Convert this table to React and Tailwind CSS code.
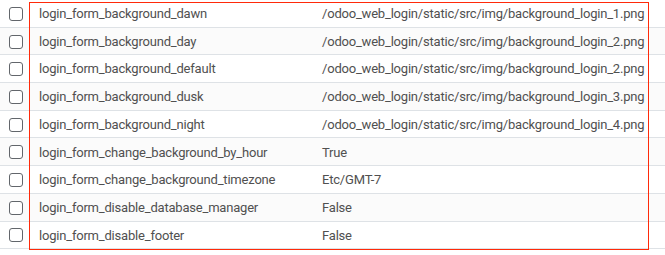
import React from "react";

const rows = [
  ["login_form_background_dawn", "/odoo_web_login/static/src/img/background_login_1.png"],
  ["login_form_background_day", "/odoo_web_login/static/src/img/background_login_2.png"],
  ["login_form_background_default", "/odoo_web_login/static/src/img/background_login_2.png"],
  ["login_form_background_dusk", "/odoo_web_login/static/src/img/background_login_3.png"],
  ["login_form_background_night", "/odoo_web_login/static/src/img/background_login_4.png"],
  ["login_form_change_background_by_hour", "True"],
  ["login_form_change_background_timezone", "Etc/GMT-7"],
  ["login_form_disable_database_manager", "False"],
  ["login_form_disable_footer", "False"],
];

export default function App() {
  return (
    <div className="relative w-[665px] h-[255px] bg-white overflow-hidden text-[13px] tracking-[-0.2px] text-[#505050]" style={{ fontFamily: "Roboto, 'Liberation Sans', sans-serif" }}>
      <div className="flex flex-col">
        {rows.map(([k, v], i) => (
          <div
            key={k}
            className={`flex items-center h-[27.7px] pt-[1px] border-b border-[#dee2e6] ${i % 2 === 1 ? "bg-[#fbfbfb]" : "bg-white"}`}
          >
            <div className="w-[30px] flex justify-center pl-[2px]">
              <span className="block w-[14px] h-[14px] rounded-[3px] border-[1.5px] border-[#62666b] bg-white" />
            </div>
            <div className="w-[283px] pl-[9px] whitespace-nowrap">{k}</div>
            <div className="flex-1 pl-[9px] whitespace-nowrap">{v}</div>
          </div>
        ))}
      </div>
      <div className="absolute left-[29px] top-[2px] w-[620px] h-[248px] border-[1.5px] border-[#ff2a0a]" />
    </div>
  );
}
